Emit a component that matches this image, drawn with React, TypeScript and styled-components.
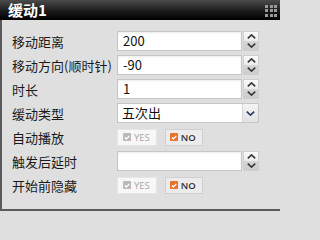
import React from 'react';
import styled, { createGlobalStyle } from 'styled-components';

const GlobalStyle = createGlobalStyle`
  html, body {
    margin: 0;
    padding: 0;
    background: #dfdfdf;
  }
  * {
    box-sizing: border-box;
  }
`;

const StyledPanel = styled.div`
  width: 280px;
  height: 211px;
  display: flex;
  flex-direction: column;
  font-family: 'Noto Sans CJK SC', 'Liberation Sans', sans-serif;
`;

const StyledTitleBar = styled.div`
  height: 20px;
  flex-shrink: 0;
  display: flex;
  align-items: center;
  justify-content: space-between;
  padding: 0 3px 0 8px;
  background: linear-gradient(#4c4c4c, #1a1a1a 55%, #000);
`;

const StyledTitle = styled.h1`
  margin: 0;
  font-size: 15px;
  font-weight: 700;
  color: #fff;
  line-height: 20px;
`;

const StyledGrip = styled.div`
  display: grid;
  grid-template-columns: repeat(3, 3px);
  grid-auto-rows: 3px;
  gap: 1.5px;
  margin-top: 1px;
  span {
    background: #9a9a9a;
  }
`;

const StyledBody = styled.div`
  flex: 1;
  display: flex;
  flex-direction: column;
  padding: 9px 0 0 10px;
  background: #dfdfdf;
  border-left: 2px solid #5a5a5a;
  border-bottom: 2px solid #5a5a5a;
`;

const StyledRow = styled.div`
  height: 24px;
  display: grid;
  grid-template-columns: 105px 142px;
  align-items: center;
`;

const StyledLabel = styled.label`
  font-size: 13px;
  color: #1a1a1a;
  white-space: nowrap;
`;

const StyledField = styled.div`
  height: 20px;
  display: flex;
`;

const StyledInput = styled.div`
  width: 126px;
  height: 20px;
  padding-left: 5px;
  background: #fff;
  border: 1px solid #c6c6c6;
  box-shadow: inset 0 1px 2px rgba(0, 0, 0, 0.08);
  font-size: 13px;
  line-height: 18px;
  color: #111;
`;

const StyledSpinner = styled.div`
  width: 16px;
  height: 20px;
  margin-left: 1px;
  display: flex;
  flex-direction: column;
  border: 1px solid #cfcfcf;
`;

const StyledSpinHalf = styled.div<{ down?: boolean }>`
  flex: 1;
  display: flex;
  align-items: center;
  justify-content: center;
  background: ${({ down }) => (down ? 'linear-gradient(#d6d6d6, #cdcdcd)' : 'linear-gradient(#fbfbfb, #ececec)')};
`;

const StyledSelect = styled.div`
  width: 142px;
  height: 20px;
  display: flex;
  background: #fff;
  border: 1px solid #c6c6c6;
`;

const StyledSelectText = styled.div`
  flex: 1;
  padding-left: 4px;
  font-size: 13px;
  line-height: 18px;
  color: #111;
`;

const StyledSelectArrow = styled.div`
  width: 16px;
  display: flex;
  align-items: center;
  justify-content: center;
  border-left: 1px solid #d4d4d4;
  background: linear-gradient(#f4f4f4, #e2e2e2);
`;

const StyledToggleGroup = styled.div`
  display: flex;
  gap: 8px;
`;

const StyledToggle = styled.div<{ active?: boolean }>`
  height: 17px;
  display: flex;
  align-items: center;
  gap: 3px;
  padding: 0 6px 0 ${({ active }) => (active ? '4px' : '5px')};
  background: ${({ active }) => (active ? '#ececec' : '#f7f7f7')};
  border: 1px solid ${({ active }) => (active ? '#d0d0d0' : '#e6e6e6')};
  font-family: 'Open Sans', 'Liberation Sans', sans-serif;
  font-size: 9.5px;
  font-weight: ${({ active }) => (active ? 600 : 400)};
  color: ${({ active }) => (active ? '#333' : '#a8a8a8')};
`;

const StyledCheck = styled.span<{ active?: boolean }>`
  width: 8px;
  height: 8px;
  display: flex;
  align-items: center;
  justify-content: center;
  border-radius: 1px;
  background: ${({ active }) => (active ? '#e8712b' : '#b9b9b9')};
`;

const Chevron = ({ up, color }: { up?: boolean; color: string }) => (
  <svg width="9" height="5" viewBox="0 0 9 5">
    <path d={up ? 'M0.8 4.3 L4.5 0.9 L8.2 4.3' : 'M0.8 0.7 L4.5 4.1 L8.2 0.7'} fill="none" stroke={color} strokeWidth="1.7" />
  </svg>
);

const Tick = () => (
  <svg width="6" height="5" viewBox="0 0 7 6">
    <path d="M0.8 3 L2.7 4.8 L6.2 1" fill="none" stroke="#fff" strokeWidth="1.5" />
  </svg>
);

const NumberField = ({ value }: { value: string }) => (
  <StyledField>
    <StyledInput>{value}</StyledInput>
    <StyledSpinner>
      <StyledSpinHalf>
        <Chevron up color="#3a3a3a" />
      </StyledSpinHalf>
      <StyledSpinHalf down>
        <Chevron color="#3a3a3a" />
      </StyledSpinHalf>
    </StyledSpinner>
  </StyledField>
);

const YesNo = ({ yes }: { yes: boolean }) => (
  <StyledToggleGroup>
    <StyledToggle active={yes}>
      <StyledCheck active={yes}>
        <Tick />
      </StyledCheck>
      YES
    </StyledToggle>
    <StyledToggle active={!yes}>
      <StyledCheck active={!yes}>
        <Tick />
      </StyledCheck>
      NO
    </StyledToggle>
  </StyledToggleGroup>
);

const App: React.FC = () => (
  <>
    <GlobalStyle />
    <StyledPanel>
      <StyledTitleBar>
        <StyledTitle>缓动1</StyledTitle>
        <StyledGrip>
          {Array.from({ length: 9 }).map((_, i) => (
            <span key={i} />
          ))}
        </StyledGrip>
      </StyledTitleBar>
      <StyledBody>
        <StyledRow>
          <StyledLabel>移动距离</StyledLabel>
          <NumberField value="200" />
        </StyledRow>
        <StyledRow>
          <StyledLabel>移动方向(顺时针)</StyledLabel>
          <NumberField value="-90" />
        </StyledRow>
        <StyledRow>
          <StyledLabel>时长</StyledLabel>
          <NumberField value="1" />
        </StyledRow>
        <StyledRow>
          <StyledLabel>缓动类型</StyledLabel>
          <StyledSelect>
            <StyledSelectText>五次出</StyledSelectText>
            <StyledSelectArrow>
              <Chevron color="#2f3c64" />
            </StyledSelectArrow>
          </StyledSelect>
        </StyledRow>
        <StyledRow>
          <StyledLabel>自动播放</StyledLabel>
          <YesNo yes={false} />
        </StyledRow>
        <StyledRow>
          <StyledLabel>触发后延时</StyledLabel>
          <NumberField value="" />
        </StyledRow>
        <StyledRow>
          <StyledLabel>开始前隐藏</StyledLabel>
          <YesNo yes={false} />
        </StyledRow>
      </StyledBody>
    </StyledPanel>
  </>
);

export default App;
